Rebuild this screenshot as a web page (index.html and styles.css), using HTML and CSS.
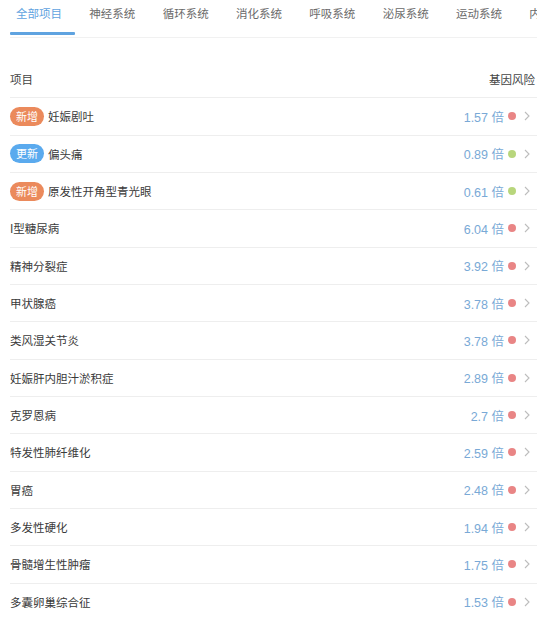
FILE: index.html
```html
<!DOCTYPE html>
<html lang="zh-CN">
<head>
<meta charset="utf-8">
<title>基因风险</title>
<link rel="stylesheet" href="styles.css">
</head>
<body>
<div class="page">
  <nav class="tabs">
    <div class="tab active">全部项目</div>
    <div class="tab">神经系统</div>
    <div class="tab">循环系统</div>
    <div class="tab">消化系统</div>
    <div class="tab">呼吸系统</div>
    <div class="tab">泌尿系统</div>
    <div class="tab">运动系统</div>
    <div class="tab">内分泌系统</div>
  </nav>
  <div class="list">
    <div class="row head"><span class="name">项目</span><span class="head-risk">基因风险</span></div>
    <div class="row"><span class="name"><span class="badge new">新增</span>妊娠剧吐</span><span class="risk">1.57 倍</span><span class="dot red"></span><svg class="chev" viewBox="0 0 6 10"><polyline points="1,1 5,5 1,9"/></svg></div>
    <div class="row"><span class="name"><span class="badge upd">更新</span>偏头痛</span><span class="risk">0.89 倍</span><span class="dot green"></span><svg class="chev" viewBox="0 0 6 10"><polyline points="1,1 5,5 1,9"/></svg></div>
    <div class="row"><span class="name"><span class="badge new">新增</span>原发性开角型青光眼</span><span class="risk">0.61 倍</span><span class="dot green"></span><svg class="chev" viewBox="0 0 6 10"><polyline points="1,1 5,5 1,9"/></svg></div>
    <div class="row"><span class="name">I型糖尿病</span><span class="risk">6.04 倍</span><span class="dot red"></span><svg class="chev" viewBox="0 0 6 10"><polyline points="1,1 5,5 1,9"/></svg></div>
    <div class="row"><span class="name">精神分裂症</span><span class="risk">3.92 倍</span><span class="dot red"></span><svg class="chev" viewBox="0 0 6 10"><polyline points="1,1 5,5 1,9"/></svg></div>
    <div class="row"><span class="name">甲状腺癌</span><span class="risk">3.78 倍</span><span class="dot red"></span><svg class="chev" viewBox="0 0 6 10"><polyline points="1,1 5,5 1,9"/></svg></div>
    <div class="row"><span class="name">类风湿关节炎</span><span class="risk">3.78 倍</span><span class="dot red"></span><svg class="chev" viewBox="0 0 6 10"><polyline points="1,1 5,5 1,9"/></svg></div>
    <div class="row"><span class="name">妊娠肝内胆汁淤积症</span><span class="risk">2.89 倍</span><span class="dot red"></span><svg class="chev" viewBox="0 0 6 10"><polyline points="1,1 5,5 1,9"/></svg></div>
    <div class="row"><span class="name">克罗恩病</span><span class="risk">2.7 倍</span><span class="dot red"></span><svg class="chev" viewBox="0 0 6 10"><polyline points="1,1 5,5 1,9"/></svg></div>
    <div class="row"><span class="name">特发性肺纤维化</span><span class="risk">2.59 倍</span><span class="dot red"></span><svg class="chev" viewBox="0 0 6 10"><polyline points="1,1 5,5 1,9"/></svg></div>
    <div class="row"><span class="name">胃癌</span><span class="risk">2.48 倍</span><span class="dot red"></span><svg class="chev" viewBox="0 0 6 10"><polyline points="1,1 5,5 1,9"/></svg></div>
    <div class="row"><span class="name">多发性硬化</span><span class="risk">1.94 倍</span><span class="dot red"></span><svg class="chev" viewBox="0 0 6 10"><polyline points="1,1 5,5 1,9"/></svg></div>
    <div class="row"><span class="name">骨髓增生性肿瘤</span><span class="risk">1.75 倍</span><span class="dot red"></span><svg class="chev" viewBox="0 0 6 10"><polyline points="1,1 5,5 1,9"/></svg></div>
    <div class="row"><span class="name">多囊卵巢综合征</span><span class="risk">1.53 倍</span><span class="dot red"></span><svg class="chev" viewBox="0 0 6 10"><polyline points="1,1 5,5 1,9"/></svg></div>
  </div>
</div>
</body>
</html>
```
FILE: styles.css
```css
html, body {
  margin: 0;
  padding: 0;
  background: #fff;
}
body {
  font-family: "Liberation Sans", "Noto Sans CJK SC", sans-serif;
  color: #3a3a3a;
  overflow: hidden;
}
.page {
  width: 537px;
  height: 619px;
  overflow: hidden;
}
.tabs {
  display: flex;
  margin-left: 10px;
  height: 37px;
  border-bottom: 1px solid #f1f1f1;
  overflow: hidden;
  white-space: nowrap;
}
.tab {
  flex: 0 0 73.33px;
  box-sizing: border-box;
  padding: 4px 0 0 6px;
  font-size: 11.5px;
  line-height: 18px;
  color: #6a6a6a;
  font-family: "Noto Sans CJK SC", sans-serif;
}
.tab.active {
  color: #5fa3e0;
}
.tab.active::after {
  content: "";
  display: block;
  width: 65px;
  height: 3px;
  margin: 10px 0 0 -6px;
  background: #5fa3e0;
  border-radius: 1px;
}
.list {
  margin-left: 10px;
  padding-top: 23px;
}
.row {
  display: flex;
  align-items: center;
  height: 36.33px;
  border-bottom: 1px solid #eeeeee;
  font-size: 11.5px;
}
.name {
  flex: 1;
  display: flex;
  align-items: center;
  font-family: "Noto Sans CJK SC", sans-serif;
  color: #3a3a3a;
}
.head .name {
  color: #444;
}
.head-risk {
  font-family: "Noto Sans CJK SC", sans-serif;
  color: #444;
  margin-right: 2px;
}
.badge {
  display: inline-block;
  width: 34px;
  height: 19px;
  line-height: 19px;
  border-radius: 10px;
  text-align: center;
  font-size: 11px;
  color: #fff;
  margin-right: 4px;
}
.badge.new {
  background: #eb8a5c;
}
.badge.upd {
  background: #5aaaee;
}
.risk {
  color: #79a9d6;
  font-size: 12.5px;
}
.dot {
  width: 8px;
  height: 8px;
  border-radius: 50%;
  margin-left: 4px;
}
.dot.red {
  background: #e98585;
}
.dot.green {
  background: #b8d67c;
}
.chev {
  width: 6px;
  height: 10px;
  margin: 0 7px 0 8px;
  fill: none;
  stroke: #bdbdbd;
  stroke-width: 1.1;
}
```
